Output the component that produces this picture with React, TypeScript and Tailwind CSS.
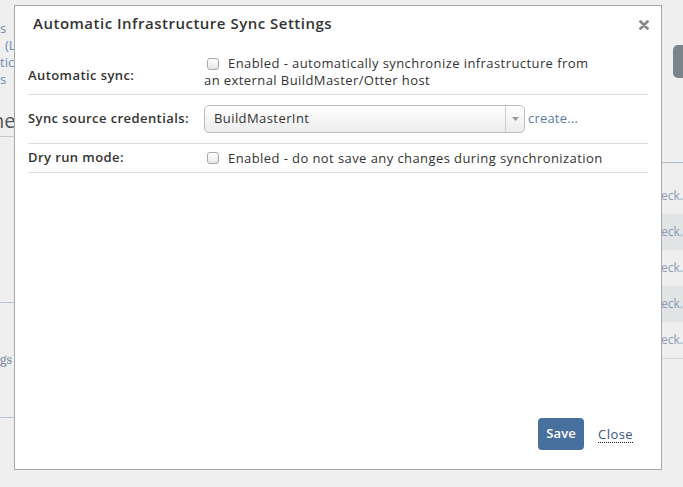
const font = { fontFamily: "'Open Sans', Lato, sans-serif" };

const Checkbox = () => (
  <span className="mr-[9px] ml-[3px] inline-block h-[12px] w-[12px] shrink-0 rounded-[3px] border border-[#a8a8a8] bg-gradient-to-b from-white to-[#e6e6e6]" />
);

const BackgroundPage = () => (
  <div className="flex h-full w-full">
    <div className="w-[80px] shrink-0 pt-[20px] text-[13px] leading-[17px] text-[#6d8cb3]">
      <p>s</p>
      <p className="pl-[5px]">(L</p>
      <p>tic</p>
      <p>s</p>
      <div className="mt-[19px] border-b border-[#c9c9c9] pb-[1px] text-[20px] leading-[28px] text-[#555]">
        <span className="-ml-[8px]">ne</span>
      </div>
      <div className="mt-[165px] border-t border-[#b7c3d0] pt-[47px] font-serif text-[14px] leading-[20px] text-[#7d8da3]">
        gs
      </div>
      <div className="mt-[47px] border-t border-[#b7c3d0]" />
    </div>
    <div className="flex-1" />
    <div className="w-[80px] shrink-0">
      <div className="ml-[70px] mt-[45px] h-[33px] w-[40px] rounded-[5px] bg-[#7b838d]" />
      <div className="mt-[84px] border-b border-[#a9b9c9]" />
      <div className="h-[15px]" />
      {[false, true, false, true, false].map((shaded, i) => (
        <div
          key={i}
          className={`flex h-[36px] items-center pl-[58px] text-[12px] text-[#8a9bb5] ${shaded ? "bg-[#e1e4e5]" : ""}`}
        >
          eck.
        </div>
      ))}
      <div className="border-t border-[#d6d6d6]" />
    </div>
  </div>
);

export default function App() {
  return (
    <div
      className="relative h-[487px] w-[683px] overflow-hidden bg-[#efefef]"
      style={font}
    >
      <BackgroundPage />

      <div className="absolute left-[14px] top-[5px] flex h-[465px] w-[648px] flex-col border border-[#a9a9a9] bg-white text-[13px] tracking-[0.42px] text-[#333]">
        <div className="flex items-start justify-between pl-[18px] pr-[12px] pt-[7px]">
          <h3 className="text-[15px] font-semibold leading-[20px] tracking-[0.5px] text-[#333]">
            Automatic Infrastructure Sync Settings
          </h3>
          <svg width="10" height="10" viewBox="0 0 10 10" className="mt-[7px]">
            <path d="M1.5 1.5l7 7M8.5 1.5l-7 7" stroke="#8a8a8a" strokeWidth="2.8" strokeLinecap="round" />
          </svg>
        </div>

        <div className="mt-[22px] px-[13px]">
          <div className="flex items-center border-b border-[#dcdcdc] pb-[5px]">
            <div className="w-[176px] shrink-0 pt-[8px] font-semibold">Automatic sync:</div>
            <div className="flex flex-col leading-[17px]">
              <div className="flex items-center whitespace-nowrap">
                <Checkbox />
                Enabled - automatically synchronize infrastructure from
              </div>
              <div className="whitespace-nowrap">an external BuildMaster/Otter host</div>
            </div>
          </div>

          <div className="flex h-[49px] items-center border-b border-[#dcdcdc]">
            <div className="w-[176px] shrink-0 font-semibold">Sync source credentials:</div>
            <div className="flex h-[28px] w-[321px] items-stretch rounded-[5px] border border-[#bdbdbd] bg-gradient-to-b from-white to-[#ececec]">
              <span className="flex flex-1 items-center pl-[9px]">BuildMasterInt</span>
              <span className="flex w-[19px] items-center justify-center border-l border-[#cfcfcf]">
                <svg width="7" height="4" viewBox="0 0 7 4">
                  <path d="M0 0h7L3.5 4z" fill="#999" />
                </svg>
              </span>
            </div>
            <span className="ml-[3px] tracking-[0.2px] text-[#5a7ba3]">create...</span>
          </div>

          <div className="flex h-[29px] items-center border-b border-[#dcdcdc]">
            <div className="w-[176px] shrink-0 font-semibold">Dry run mode:</div>
            <div className="flex items-center whitespace-nowrap leading-[17px]">
              <Checkbox />
              Enabled - do not save any changes during synchronization
            </div>
          </div>
        </div>

        <div className="mt-auto flex items-center justify-end gap-[14px] pb-[19px] pr-[28px]">
          <button
            type="button"
            className="h-[32px] w-[46px] rounded-[4px] bg-[#48709e] text-[13px] font-semibold tracking-[0.2px] text-white"
          >
            Save
          </button>
          <button
            type="button"
            className="border-b border-dotted border-[#222] leading-[16px] text-[#34557d]"
          >
            Close
          </button>
        </div>
      </div>
    </div>
  );
}
